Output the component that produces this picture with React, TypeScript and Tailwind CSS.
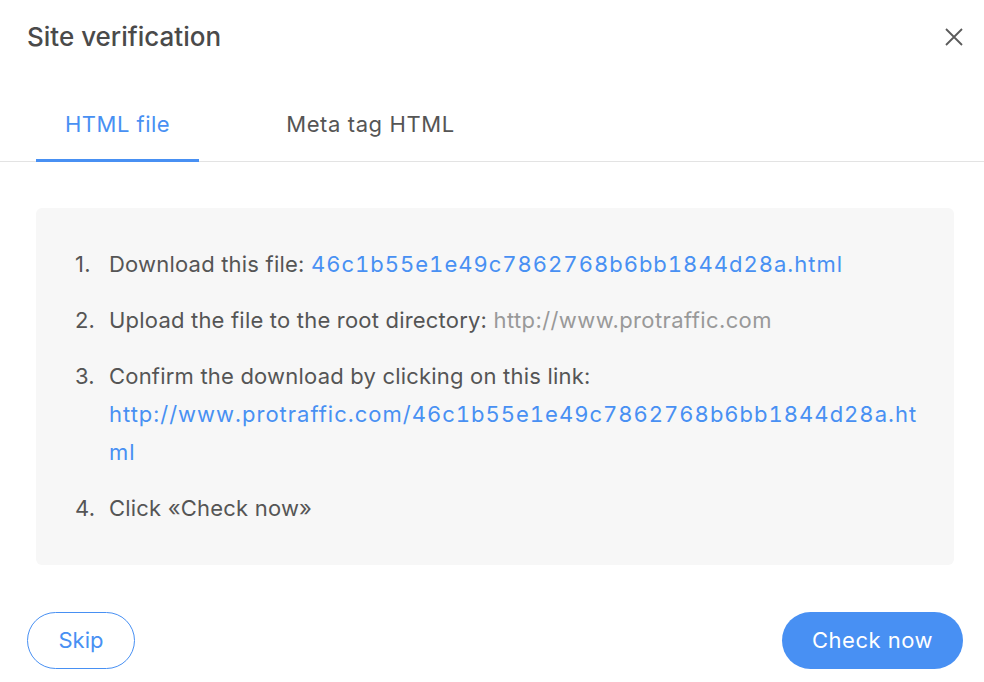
import React, { useState } from 'react';

const FILE_NAME = '46c1b55e1e49c7862768b6bb1844d28a.html';
const SITE = 'http://www.protraffic.com';

export default function App() {
  const [tab, setTab] = useState<'file' | 'meta'>('file');

  return (
    <div
      className="w-[984px] h-[682px] bg-white flex flex-col text-[#555555] overflow-hidden"
      style={{ fontFamily: 'Inter, "Noto Sans", sans-serif' }}
    >
      {/* Header */}
      <div className="flex items-center justify-between pt-[18px] pl-[27px] pr-[21px]">
        <h2 className="text-[26px] leading-[38px] font-medium text-[#4a4a4a] tracking-[0px]">Site verification</h2>
        <button className="w-[18px] h-[18px] text-[#5a5a5a]">
          <svg viewBox="0 0 18 18" className="w-[18px] h-[18px]" fill="none" stroke="currentColor" strokeWidth="1.8">
            <path d="M1 1L17 17M17 1L1 17" />
          </svg>
        </button>
      </div>

      {/* Tabs */}
      <div className="mt-[49px] flex gap-[58px] pl-[36px] border-b border-[#e3e3e3]">
        <button
          onClick={() => setTab('file')}
          className={`-mb-px px-[29px] pb-[16px] text-[22px] leading-[38px] tracking-[0.5px] border-b-[3px] ${
            tab === 'file' ? 'border-[#4890f3] text-[#4890f3]' : 'border-transparent text-[#555555]'
          }`}
        >
          HTML file
        </button>
        <button
          onClick={() => setTab('meta')}
          className={`-mb-px px-[29px] pb-[16px] text-[22px] leading-[38px] tracking-[0.6px] border-b-[3px] ${
            tab === 'meta' ? 'border-[#4890f3] text-[#4890f3]' : 'border-transparent text-[#555555]'
          }`}
        >
          Meta tag HTML
        </button>
      </div>

      {/* Instructions */}
      <div className="mt-[46px] ml-[36px] mr-[30px] bg-[#f7f7f7] rounded-[6px] pt-[37px] pb-[38px] pl-[39px] pr-[34px]">
        <ol className="flex flex-col gap-[18px] text-[22px] leading-[38px] tracking-[0.2px]">
          <li className="flex">
            <span className="w-[34px] shrink-0">1.</span>
            <span>
              Download this file:{' '}
              <span className="text-[#4890f3] tabular-nums tracking-[1px]">{FILE_NAME}</span>
            </span>
          </li>
          <li className="flex">
            <span className="w-[34px] shrink-0">2.</span>
            <span>
              Upload the file to the root directory:{' '}
              <span className="text-[#999999] tracking-[0.4px]">{SITE}</span>
            </span>
          </li>
          <li className="flex">
            <span className="w-[34px] shrink-0">3.</span>
            <span className="min-w-0 flex-1">
              Confirm the download by clicking on this link:
              <br />
              <span className="text-[#4890f3] break-all tabular-nums tracking-[1px]">
                {SITE}/{FILE_NAME}
              </span>
            </span>
          </li>
          <li className="flex">
            <span className="w-[34px] shrink-0">4.</span>
            <span>Click «Check now»</span>
          </li>
        </ol>
      </div>

      {/* Footer */}
      <div className="mt-[47px] flex items-center justify-between pl-[27px] pr-[21px]">
        <button className="w-[108px] h-[57px] rounded-full border border-[#4890f3] text-[#4890f3] text-[22px]">
          Skip
        </button>
        <button className="w-[181px] h-[57px] rounded-full bg-[#4890f3] text-white text-[22px] tracking-[0.5px]">
          Check now
        </button>
      </div>
    </div>
  );
}
